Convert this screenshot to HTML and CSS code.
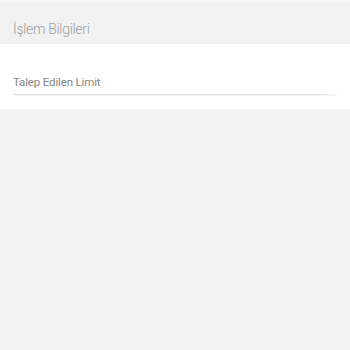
FILE: index.html
```html
<!DOCTYPE html>
<html lang="tr">
<head>
<meta charset="utf-8">
<link rel="stylesheet" href="styles.css">
</head>
<body>
<div class="page">
  <div class="header">İşlem Bilgileri</div>
  <div class="section">
    <div class="field">
      <div class="label">Talep Edilen Limit</div>
      <div class="line"></div>
    </div>
  </div>
</div>
</body>
</html>
```
FILE: styles.css
```css
html, body {
  margin: 0;
  padding: 0;
  background: #f2f2f2;
  font-family: Roboto, "Liberation Sans", sans-serif;
}
.page {
  width: 350px;
  height: 350px;
  border-top: 2px solid #f7f7f7;
  box-sizing: border-box;
}
.header {
  height: 42px;
  box-sizing: border-box;
  padding: 17px 13px 0;
  font-size: 14px;
  font-weight: 300;
  letter-spacing: -0.3px;
  color: #9e9e9e;
  line-height: 20px;
}
.section {
  background: #ffffff;
  height: 66px;
  padding: 0 13px 0 13px;
  box-sizing: border-box;
  border-bottom: 1px solid #f7f7f7;
}
.field {
  padding-top: 30px;
}
.label {
  font-size: 11.5px;
  letter-spacing: -0.15px;
  color: #858585;
  line-height: 17px;
}
.line {
  margin-top: 3px;
  height: 1px;
  width: 325px;
  background: linear-gradient(to right, #dcdcdc 0%, #dcdcdc 94%, #ffffff 100%);
  box-shadow: 0 1px 1px rgba(0,0,0,0.04);
}
```
